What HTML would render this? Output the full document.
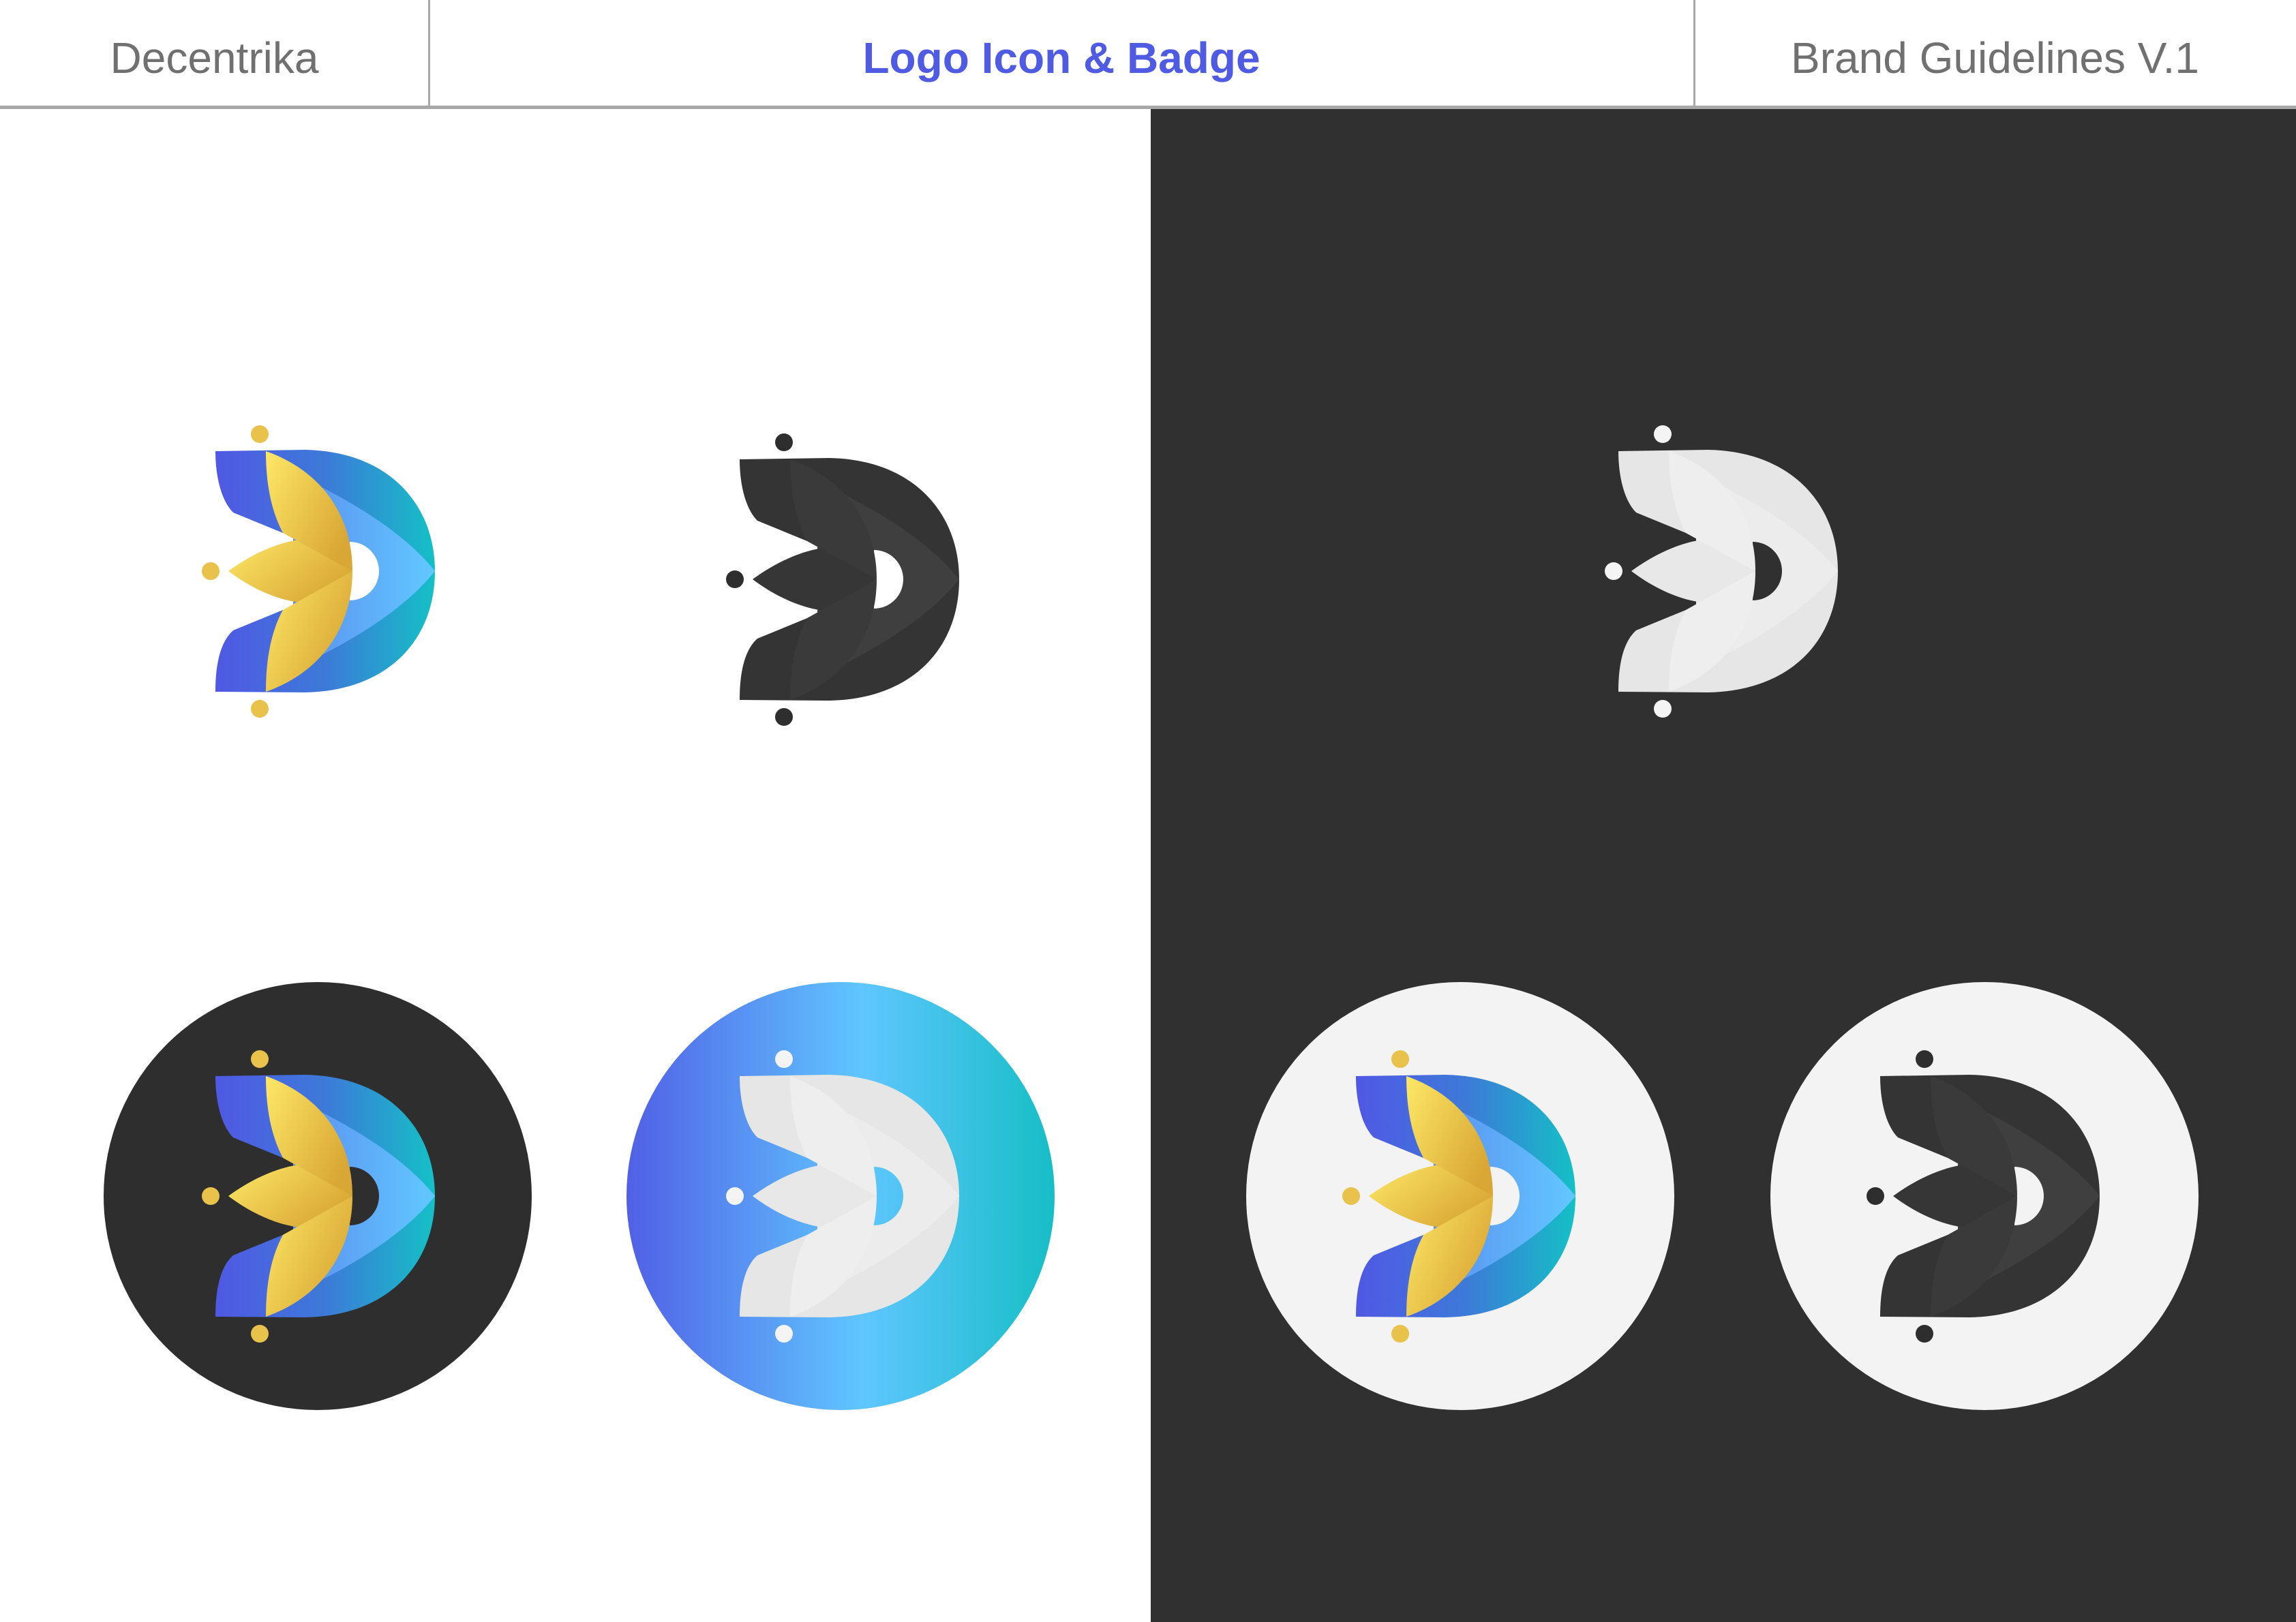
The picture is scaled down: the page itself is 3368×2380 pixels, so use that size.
<!DOCTYPE html>
<html><head><meta charset="utf-8"><style>
html,body{margin:0;padding:0}
body{width:3368px;height:2380px;position:relative;background:#fff;overflow:hidden;font-family:"Liberation Sans",sans-serif}
.h{position:absolute;top:0;height:157px;line-height:170px;font-size:64px;text-align:center}
</style></head><body>
<div class="h" style="left:0;width:629px;color:#707070">Decentrika</div>
<div class="h" style="left:629px;width:1856px;color:#4f5be3;font-weight:bold">Logo Icon &amp; Badge</div>
<div class="h" style="left:2485px;width:883px;color:#707070">Brand Guidelines V.1</div>
<div style="position:absolute;left:628px;top:0;width:3px;height:157px;background:#a8a8a8"></div>
<div style="position:absolute;left:2484px;top:0;width:3px;height:157px;background:#a8a8a8"></div>
<div style="position:absolute;left:0;top:155px;width:3368px;height:5px;background:#a8a8a8"></div>
<div style="position:absolute;left:1688px;top:160px;width:1680px;height:2220px;background:#303030"></div>
<svg width="3368" height="2380" style="position:absolute;left:0;top:0">
<defs>
<linearGradient id="bl" x1="0" y1="0" x2="1" y2="0"><stop offset="0" stop-color="#5058e4"/><stop offset="0.5" stop-color="#3d7ad8"/><stop offset="1" stop-color="#14c0c6"/></linearGradient>
<linearGradient id="bl2" x1="0" y1="0" x2="1" y2="0"><stop offset="0" stop-color="#5a8ff0"/><stop offset="1" stop-color="#62c8ff"/></linearGradient>
<linearGradient id="gd" x1="0" y1="0" x2="1" y2="0.6"><stop offset="0" stop-color="#fde866"/><stop offset="1" stop-color="#d9a735"/></linearGradient>
<linearGradient id="bg2" x1="0" y1="0" x2="1" y2="0"><stop offset="0" stop-color="#5160e6"/><stop offset="0.55" stop-color="#5fc6ff"/><stop offset="1" stop-color="#16bec6"/></linearGradient>
<mask id="hm" maskUnits="userSpaceOnUse" x="0" y="0" width="400" height="480"><rect width="400" height="480" fill="#fff"/><path d="M233,195 A43,43 0 0 1 233,281 Z" fill="#000"/></mask>
<symbol id="Lc" viewBox="0 0 400 480" width="400" height="480" overflow="visible">
<g mask="url(#hm)">
<path d="M36,62 L167,60 C290,62 358,140 358,238 C358,338 290,414 167,416 L36,415 C36,370 45,340 62,325 L135,295 L233,281 L233,195 L135,182 L62,152 C45,135 36,100 36,62 Z" fill="url(#bl)"/>
<path d="M150,95 C250,140 320,190 358,238 C320,286 250,336 150,381 L150,238 Z" fill="url(#bl2)"/>
</g>
<path d="M55,238 C100,205 140,194 160,192 L237,238 L160,284 C140,282 100,272 55,238 Z" fill="url(#gd)"/>
<path d="M110,62 C195,92 237,160 237,238 L135,182 C118,150 110,110 110,62 Z" fill="url(#gd)"/>
<path d="M110,415 C195,385 237,316 237,238 L135,295 C118,326 110,366 110,415 Z" fill="url(#gd)"/>
<circle cx="101" cy="37" r="13" fill="#e8c24a"/><circle cx="29" cy="238" r="13" fill="#e8c24a"/><circle cx="101" cy="440" r="13" fill="#e8c24a"/>
</symbol>
<symbol id="Ld" viewBox="0 0 400 480" width="400" height="480" overflow="visible">
<g mask="url(#hm)">
<path d="M36,62 L167,60 C290,62 358,140 358,238 C358,338 290,414 167,416 L36,415 C36,370 45,340 62,325 L135,295 L233,281 L233,195 L135,182 L62,152 C45,135 36,100 36,62 Z" fill="#343434"/>
<path d="M150,95 C250,140 320,190 358,238 C320,286 250,336 150,381 L150,238 Z" fill="#3f3f3f"/>
</g>
<path d="M55,238 C100,205 140,194 160,192 L237,238 L160,284 C140,282 100,272 55,238 Z" fill="#363636"/>
<path d="M110,62 C195,92 237,160 237,238 L135,182 C118,150 110,110 110,62 Z" fill="#3a3a3a"/>
<path d="M110,415 C195,385 237,316 237,238 L135,295 C118,326 110,366 110,415 Z" fill="#3a3a3a"/>
<circle cx="101" cy="37" r="13" fill="#2e2e2e"/><circle cx="29" cy="238" r="13" fill="#2e2e2e"/><circle cx="101" cy="440" r="13" fill="#2e2e2e"/>
</symbol>
<symbol id="Lw" viewBox="0 0 400 480" width="400" height="480" overflow="visible">
<g mask="url(#hm)">
<path d="M36,62 L167,60 C290,62 358,140 358,238 C358,338 290,414 167,416 L36,415 C36,370 45,340 62,325 L135,295 L233,281 L233,195 L135,182 L62,152 C45,135 36,100 36,62 Z" fill="#e6e6e6"/>
<path d="M150,95 C250,140 320,190 358,238 C320,286 250,336 150,381 L150,238 Z" fill="#ececec"/>
</g>
<path d="M55,238 C100,205 140,194 160,192 L237,238 L160,284 C140,282 100,272 55,238 Z" fill="#e8e8e8"/>
<path d="M110,62 C195,92 237,160 237,238 L135,182 C118,150 110,110 110,62 Z" fill="#eeeeee"/>
<path d="M110,415 C195,385 237,316 237,238 L135,295 C118,326 110,366 110,415 Z" fill="#eeeeee"/>
<circle cx="101" cy="37" r="13" fill="#f4f4f4"/><circle cx="29" cy="238" r="13" fill="#f4f4f4"/><circle cx="101" cy="440" r="13" fill="#f4f4f4"/>
</symbol>
</defs>
<use href="#Lc" x="280" y="600"/>
<use href="#Ld" x="1049" y="612"/>
<use href="#Lw" x="2338" y="600"/>
<circle cx="466" cy="1755" r="314" fill="#2e2e2e"/>
<circle cx="1233" cy="1755" r="314" fill="url(#bg2)"/>
<circle cx="2142" cy="1755" r="314" fill="#f3f3f3"/>
<circle cx="2911" cy="1755" r="314" fill="#f3f3f3"/>
<use href="#Lc" x="280" y="1517"/>
<use href="#Lw" x="1049" y="1517"/>
<use href="#Lc" x="1953" y="1517"/>
<use href="#Ld" x="2722" y="1517"/>
</svg>
</body></html>
